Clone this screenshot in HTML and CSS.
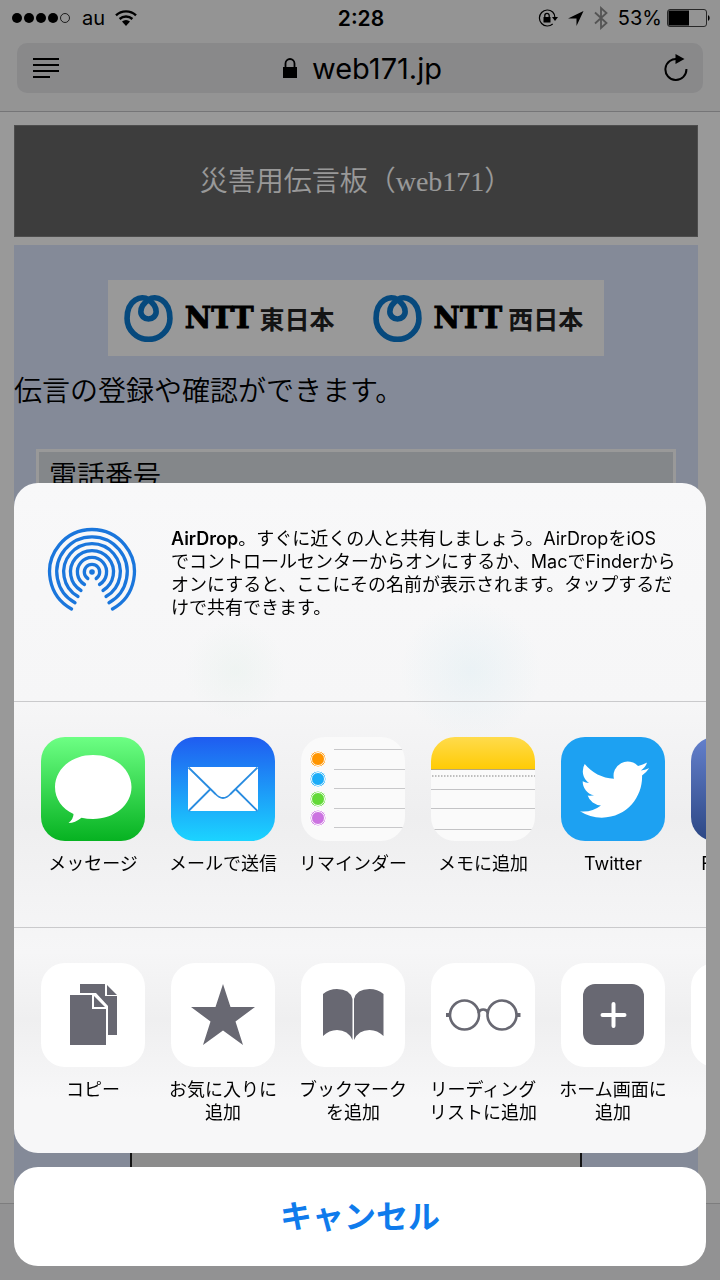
FILE: index.html
```html
<!DOCTYPE html>
<html lang="ja">
<head>
<meta charset="utf-8">
<meta name="viewport" content="width=device-width, initial-scale=1">
<title>災害用伝言板（web171）</title>
<link rel="stylesheet" href="styles.css">
</head>
<body>
<div class="browser">
  <header class="chrome">
    <div class="status">
      <div class="status-left">
        <svg width="60" height="12" viewBox="0 0 60 12" aria-hidden="true"><circle cx="5" cy="6" r="5"/><circle cx="17" cy="6" r="5"/><circle cx="29" cy="6" r="5"/><circle cx="41" cy="6" r="5"/><circle cx="53" cy="6" r="4.5" fill="none" stroke="#000" stroke-width=".8"/></svg>
        <span>au</span>
        <svg width="22" height="16" viewBox="0 0 22 16" aria-hidden="true"><path d="M1 5.4a14.5 14.5 0 0 1 20 0M4.6 9a9.4 9.4 0 0 1 12.8 0" fill="none" stroke="#000" stroke-width="2.4"/><path d="M7 11.6a6 6 0 0 1 8 0L11 16z"/></svg>
      </div>
      <strong class="clock">2:28</strong>
      <div class="status-right">
        <svg width="20" height="18" viewBox="0 0 20 18" aria-hidden="true"><path d="M14.7 3A8 8 0 1 0 14.7 15M14.7 3A8 8 0 0 1 17 9" fill="none" stroke="#000" stroke-width="1.2"/><path d="M14 8h6l-3 4zM5.5 8h7v5.500h-7z"/><path d="M6.800 8V6.500a2.200 2.200 0 0 1 4.400 0V8" fill="none" stroke="#000" stroke-width="1.3"/></svg>
        <svg width="16" height="15" viewBox="0 0 16 15" aria-hidden="true"><path d="M15.500 0 8.500 15V7.500H0z"/></svg>
        <svg width="14" height="24" viewBox="0 0 14 24" aria-hidden="true"><path d="M1 6.500 12.500 17 7 22V2l5.500 5L1 17.500" fill="none" stroke="#8c8c8c" stroke-width="1.800"/></svg>
        <span class="charge">53%</span>
        <svg width="43" height="18" viewBox="0 0 43 18" aria-hidden="true"><rect x=".5" y=".5" width="39" height="17" rx="2.500" fill="none" stroke="#444"/><path d="M1.500 1.500H22v15H1.500zM41 6a3.500 3.500 0 0 1 0 6z"/></svg>
      </div>
    </div>
    <div class="address">
      <button class="tool" aria-label="リーダー表示"><svg width="28" height="22" viewBox="0 0 28 22"><path d="M1 2h26M1 8h26M1 14h26M1 20h17" stroke="#000" stroke-width="1.800"/></svg></button>
      <button class="url"><svg width="16" height="20" viewBox="0 0 16 20" aria-hidden="true"><path d="M1 9h14v11H1z"/><path d="M3.500 9V5.500a4.500 4.500 0 0 1 9 0V9" fill="none" stroke="#000" stroke-width="1.800"/></svg><span>web171.jp</span></button>
      <button class="tool" aria-label="再読み込み"><svg width="24" height="28" viewBox="0 0 24 28"><path d="M14 5.200A10.500 10.500 0 1 0 22.400 15" fill="none" stroke="#000" stroke-width="2"/><path d="m11.500 0 9 5-9 5z"/></svg></button>
    </div>
  </header>

  <main class="page">
    <h1 class="banner">災害用伝言板（web171）</h1>
    <section class="content">
      <div class="logos">
        <div class="logo">
          <svg width="49" height="47" viewBox="0 0 48 46" aria-hidden="true"><path d="M24 4.500C17 0 3 4 3 23a21 20.500 0 0 0 42 0C45 4 31 0 24 4.500ZM24 4.500C29 8 31.500 12 31.500 16.500a7.500 7 0 0 1-15 0C16.500 12 19 8 24 4.500Z" fill="none" stroke="#0a7bd0" stroke-width="5.500"/></svg>
          <b class="ntt">NTT</b><b class="area">東日本</b>
        </div>
        <div class="logo">
          <svg width="49" height="47" viewBox="0 0 48 46" aria-hidden="true"><path d="M24 4.500C17 0 3 4 3 23a21 20.500 0 0 0 42 0C45 4 31 0 24 4.500ZM24 4.500C29 8 31.500 12 31.500 16.500a7.500 7 0 0 1-15 0C16.500 12 19 8 24 4.500Z" fill="none" stroke="#0a7bd0" stroke-width="5.500"/></svg>
          <b class="ntt">NTT</b><b class="area">西日本</b>
        </div>
      </div>
      <p class="lead">伝言の登録や確認ができます。</p>
      <div class="phone">電話番号</div>
      <div class="panel"></div>
    </section>
  </main>
  <footer class="bottom-bar"></footer>
</div>

<div class="overlay">
  <div class="sheet" role="dialog" aria-label="共有">
    <section class="airdrop">
      <svg class="airdrop-icon" width="90" height="86" viewBox="0 0 90 86" aria-hidden="true">
        <circle cx="45" cy="45" r="2.800" fill="#1a76dc"/>
        <g fill="none" stroke="#1a76dc" stroke-width="3.300" stroke-linecap="round">
          <path d="M40.800 51.500a7.700 7.700 0 1 1 8.400 0"/>
          <path d="M37.500 57.500a14.600 14.600 0 1 1 15 0"/>
          <path d="M34 63.500a21.500 21.500 0 1 1 22 0"/>
          <path d="M31 69.500a28.300 28.300 0 1 1 28 0"/>
          <path d="M28 75.800a35.200 35.200 0 1 1 34 0"/>
          <path d="M24.500 82a42.400 42.400 0 1 1 41 0"/>
        </g>
      </svg>
      <p class="airdrop-text"><b>AirDrop</b>。すぐに近くの人と共有しましょう。AirDropをiOS<br>でコントロールセンターからオンにするか、MacでFinderから<br>オンにすると、ここにその名前が表示されます。タップするだ<br>けで共有できます。</p>
    </section>

    <section class="row">
      <button class="item">
        <svg class="icon" viewBox="0 0 104 104" aria-hidden="true"><defs><linearGradient id="green" x2="0" y2="1"><stop stop-color="#6dff84"/><stop offset="1" stop-color="#06b221"/></linearGradient></defs><path fill="url(#green)" d="M0 0h104v104H0z"/><path fill="#fff" d="M52 18c21.500 0 38.500 14.200 38.500 32S73.500 82 52 82q-6 0-11.500-1.300C36 84 32 86 27.500 86q5-4 5-9C21 71.500 14 62 14 50c0-17.800 16.500-32 38-32z"/></svg>
        <span>メッセージ</span>
      </button>
      <button class="item">
        <svg class="icon" viewBox="0 0 104 104" aria-hidden="true"><defs><linearGradient id="blue" x2="0" y2="1"><stop stop-color="#1f5cf0"/><stop offset="1" stop-color="#1bd4ff"/></linearGradient></defs><path fill="url(#blue)" d="M0 0h104v104H0z"/><path fill="#fff" d="M17 30h70v44H17z"/><path d="m17.500 30.500 27 26.500q7.500 8 15 0l27-26.500M17.500 74 39 52.500M86.500 74 65 52.500" fill="none" stroke="#2a8ce0" stroke-width="1.800"/></svg>
        <span>メールで送信</span>
      </button>
      <button class="item">
        <svg class="icon" viewBox="0 0 104 104" aria-hidden="true"><path fill="#fafafa" d="M0 0h104v104H0z"/><path d="M33 12.500h71M33 32.500h71M33 51.500h71M33 71.500h71M33 90.500h71" stroke="#c8c8ca"/><g stroke="#fff" stroke-width="1"><g fill="#ff9500"><circle cx="17" cy="22" r="8"/><circle cx="17" cy="22" r="6.500"/></g><g fill="#1badf8"><circle cx="17" cy="42" r="8"/><circle cx="17" cy="42" r="6.500"/></g><g fill="#63da38"><circle cx="17" cy="62" r="8"/><circle cx="17" cy="62" r="6.500"/></g><g fill="#cc73e1"><circle cx="17" cy="81" r="8"/><circle cx="17" cy="81" r="6.500"/></g></g></svg>
        <span>リマインダー</span>
      </button>
      <button class="item">
        <svg class="icon" viewBox="0 0 104 104" aria-hidden="true"><defs><linearGradient id="yellow" x2="0" y2="1"><stop stop-color="#ffdb4c"/><stop offset="1" stop-color="#ffcb05"/></linearGradient></defs><path fill="#fafafa" d="M0 0h104v104H0z"/><path fill="url(#yellow)" d="M0 0h104v32H0z"/><path d="M0 32.500h104" stroke="#b5a77a"/><path d="M1 39h103" stroke="#aaa" stroke-width="1.500" stroke-dasharray="1.500 1.500"/><path d="M0 52.500h104M0 71.500h104M0 92.500h104" stroke="#c3c3c5"/></svg>
        <span>メモに追加</span>
      </button>
      <button class="item">
        <svg class="icon" viewBox="0 0 104 104" aria-hidden="true"><path fill="#1da1f2" d="M0 0h104v104H0z"/><path fill="#fff" transform="translate(19 18) scale(2.880)" d="M23.953 4.570a10 10 0 01-2.825.775 4.958 4.958 0 002.163-2.723c-.951.555-2.005.959-3.127 1.184a4.920 4.920 0 00-8.384 4.482C7.690 8.095 4.067 6.130 1.640 3.162a4.822 4.822 0 00-.666 2.475c0 1.710.870 3.213 2.188 4.096a4.904 4.904 0 01-2.228-.616v.060a4.923 4.923 0 003.946 4.827 4.996 4.996 0 01-2.212.085 4.936 4.936 0 004.604 3.417 9.867 9.867 0 01-6.102 2.105c-.390 0-.779-.023-1.170-.067a13.995 13.995 0 007.557 2.209c9.053 0 13.998-7.496 13.998-13.985 0-.210 0-.420-.015-.630A9.935 9.935 0 0024 4.590z"/></svg>
        <span>Twitter</span>
      </button>
      <button class="item">
        <svg class="icon" viewBox="0 0 104 104" aria-hidden="true"><defs><linearGradient id="navy" x2="0" y2="1"><stop stop-color="#6480cc"/><stop offset="1" stop-color="#2c4784"/></linearGradient></defs><path fill="url(#navy)" d="M0 0h104v104H0z"/></svg>
        <span>Facebook</span>
      </button>
    </section>

    <section class="row">
      <button class="item">
        <svg class="icon action" viewBox="0 0 104 104" aria-hidden="true"><path d="M39 21h25v12h12v39h-9V43L55 30H39zM66 22l10 10H66zM29 32h22v14h14v36H29zM53 33l11 11H53z"/></svg>
        <span>コピー</span>
      </button>
      <button class="item">
        <svg class="icon action" viewBox="0 0 104 104" aria-hidden="true"><path d="m52 21 7.500 23H84L64.500 58.500 72 82 52 67.500 32 82l7.500-23.500L20 44h24.500z"/></svg>
        <span>お気に入りに<br>追加</span>
      </button>
      <button class="item">
        <svg class="icon action" viewBox="0 0 104 104" aria-hidden="true"><path d="M22 31q6-5 14-5 13 0 15.500 10v41Q47 67 36 67q-8 0-14 6zM82.500 31q-6-5-14-5-13 0-15.500 10v41q4.500-10 15.500-10 8 0 14 6z"/></svg>
        <span>ブックマーク<br>を追加</span>
      </button>
      <button class="item">
        <svg class="icon action" viewBox="0 0 104 104" aria-hidden="true"><g fill="none" stroke="#686872" stroke-width="2.600"><circle cx="33.500" cy="52" r="14.500"/><circle cx="71" cy="52" r="14.500"/><path d="M47.500 50q1-3.500 4.700-3.500t4.800 3.500"/><path d="M15 52h4M85.500 52h4" stroke-width="4"/></g></svg>
        <span>リーディング<br>リストに追加</span>
      </button>
      <button class="item">
        <svg class="icon action" viewBox="0 0 104 104" aria-hidden="true"><rect x="22" y="21" width="61" height="61" rx="12"/><path d="M52.500 41v22M41.500 52h22" stroke="#fff" stroke-width="4" stroke-linecap="round"/></svg>
        <span>ホーム画面に<br>追加</span>
      </button>
      <button class="item" aria-label="その他">
        <svg class="icon action" viewBox="0 0 104 104" aria-hidden="true"></svg>
      </button>
    </section>
  </div>
  <button class="cancel">キャンセル</button>
</div>
</body>
</html>
```
FILE: styles.css
```css
* {
  box-sizing: border-box;
}

body {
  margin: 0;
  font-family: Inter, "Noto Sans CJK JP", sans-serif;
  font-size: 18px;
  color: #000;
  background: #fff;
}

button {
  padding: 0;
  border: 0;
  background: none;
  color: inherit;
  font: inherit;
}

svg {
  display: block;
  flex-shrink: 0;
}

/* Browser behind the share sheet */
.browser {
  display: flex;
  flex-direction: column;
  min-height: 100vh;
}

.chrome {
  padding-bottom: 18px;
  background: #f7f7f7;
  border-bottom: 1px solid #c4c4c6;
}

.status {
  display: grid;
  grid-template-columns: 1fr auto 1fr;
  align-items: center;
  height: 36px;
  margin-bottom: 7px;
  padding: 0 10px 0 12px;
  font-size: 20px;
}

.status-left,
.status-right {
  display: flex;
  align-items: center;
  gap: 10px;
}

.status-right {
  justify-content: flex-end;
}

.charge {
  margin-right: -5px;
}

.clock {
  font-size: 21px;
  font-weight: 600;
}

.address {
  display: flex;
  align-items: center;
  justify-content: space-between;
  height: 50px;
  margin: 0 17px;
  padding: 0 15px;
  border-radius: 10px;
  background: #e4e4e7;
}

.url {
  display: flex;
  align-items: center;
  gap: 14px;
  font-size: 29px;
}

.page {
  display: flex;
  flex: 1;
  flex-direction: column;
  gap: 8px;
  padding: 13px 22px 0 14px;
  font-family: "Liberation Serif", "Noto Sans CJK JP", serif;
  font-size: 28px;
  font-weight: 350;
}

.banner {
  margin: 0;
  padding-top: 2px;
  border: 1px solid #808080;
  background: #666;
  color: #fff;
  font-size: 28px;
  font-weight: 350;
  line-height: 108px;
  text-align: center;
}

.content {
  display: flex;
  flex: 1;
  flex-direction: column;
  padding-top: 35px;
  background: #dce6fd;
}

.logos {
  display: flex;
  align-self: center;
  gap: 38px;
  height: 76px;
  padding: 0 21px 0 16px;
  align-items: center;
  background: #fff;
}

.logo {
  display: flex;
  align-items: center;
}

.ntt {
  margin: 0 6px 0 12px;
  font-family: "DejaVu Serif", serif;
  font-size: 29px;
  font-weight: 700;
  -webkit-text-stroke: 1px #000;
}

.area {
  color: #222;
  font-family: "Noto Sans CJK JP", sans-serif;
  font-size: 25px;
  font-weight: 700;
}

.lead {
  margin: 16px 0 37px;
  line-height: 40px;
}

.phone {
  margin: 0 22px;
  padding: 5px 10px 1px;
  border: 3px solid #fff;
  background: #dce1e6;
  line-height: 40px;
}

.panel {
  flex: 1;
  align-self: center;
  width: 66%;
  margin-top: 40px;
  border: 2px solid #222;
  border-bottom: 0;
  background: #eaeaea;
}

.bottom-bar {
  height: 77px;
  border-top: 1px solid #d0d0d2;
  background: #f3f3f5;
}

/* Share sheet */
.overlay {
  position: fixed;
  inset: 0;
  display: flex;
  flex-direction: column;
  justify-content: flex-end;
  gap: 14px;
  padding: 14px;
  background: rgba(0, 0, 0, 0.4);
}

.sheet {
  overflow: hidden;
  border-radius: 24px;
  background:
    radial-gradient(circle at 66% 28%, rgba(218, 236, 242, 0.4), transparent 70px),
    radial-gradient(circle at 32% 28%, rgba(228, 240, 234, 0.4), transparent 50px),
    linear-gradient(#f8f8f9 0%, #f6f6f7 33%, #eeeeef 50%, #f3f3f4 62%, #f6f6f7 70%, #efeff0 80%, #f7f7f8 92%);
}

.airdrop {
  display: flex;
  align-items: flex-start;
  gap: 34px;
  min-height: 218px;
  padding: 44px 22px 44px 33px;
}

.airdrop-text {
  flex: 1;
  margin: 0;
  line-height: 23px;
}

.airdrop-text b {
  font-weight: 600;
}

.row {
  display: flex;
  gap: 26px;
  min-height: 226px;
  padding: 35px 0 28px 27px;
  border-top: 1px solid #cacacc;
}

.item {
  display: flex;
  flex: 0 0 104px;
  flex-direction: column;
  align-items: center;
  gap: 11px;
  min-width: 0;
  line-height: 23px;
  white-space: nowrap;
}

.icon {
  width: 104px;
  height: 104px;
  border-radius: 24px;
}

.action {
  background: #fff;
  fill: #686872;
}

.cancel {
  min-height: 99px;
  padding-bottom: 5px;
  border-radius: 24px;
  background: #fff;
  color: #0f7bec;
  font-size: 32px;
  font-weight: 700;
}
```
